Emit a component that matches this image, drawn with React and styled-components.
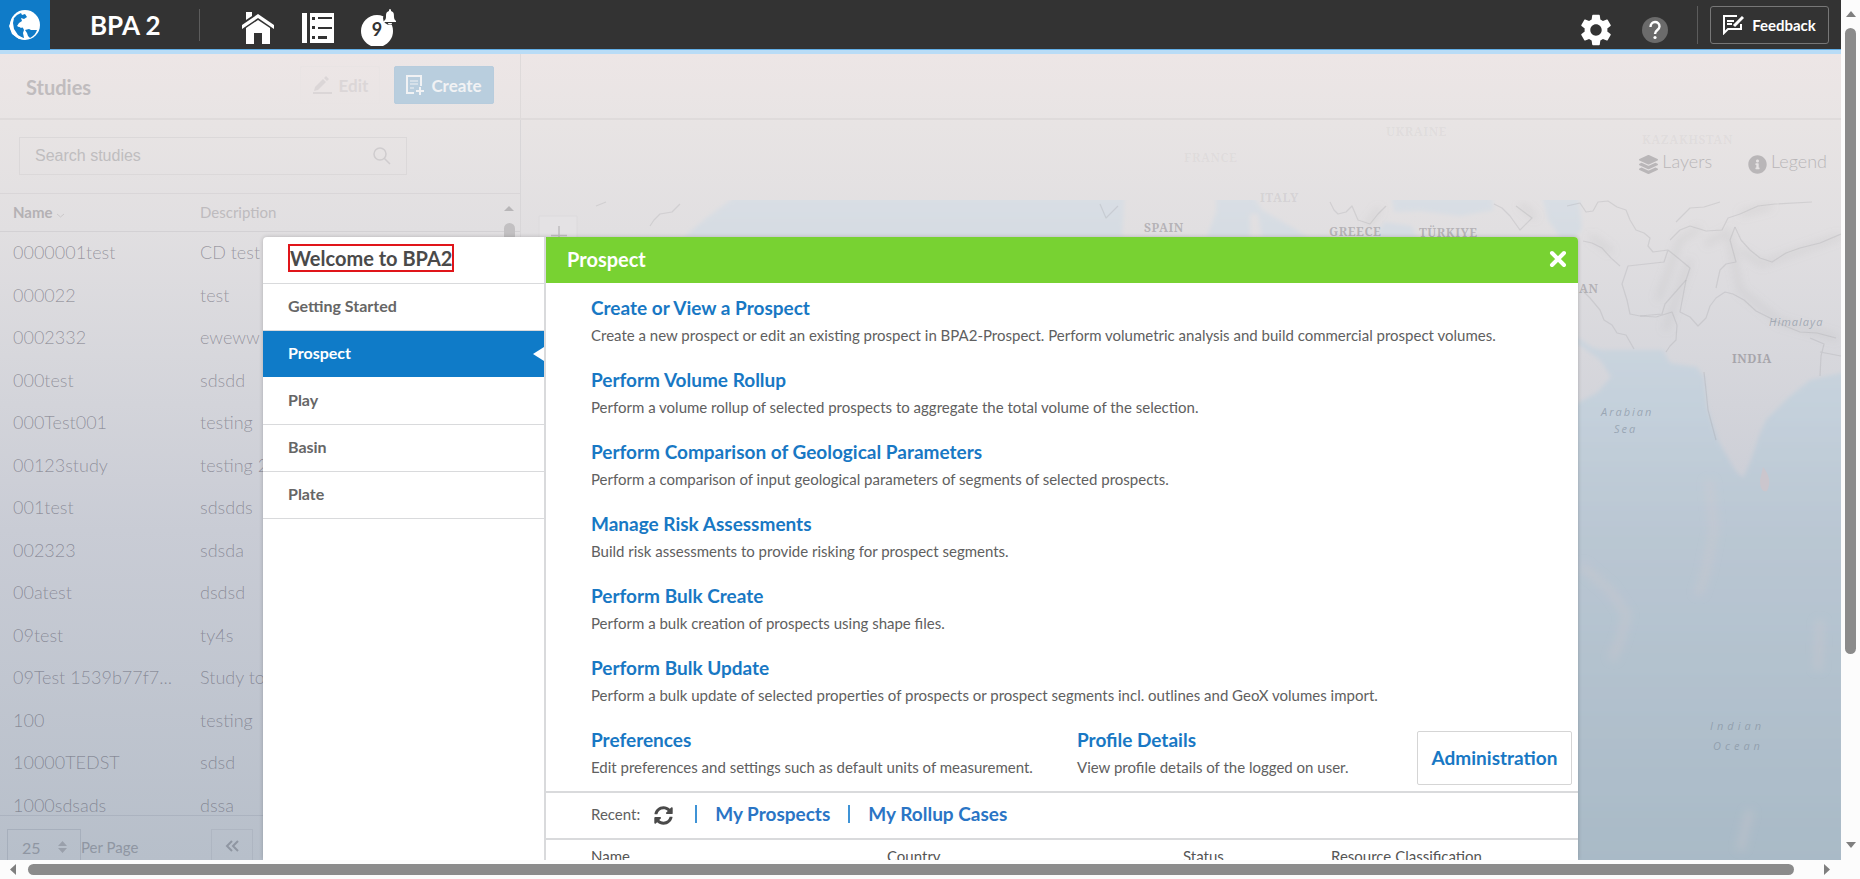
import React from "react";
import styled, { createGlobalStyle } from "styled-components";
import { FaLayerGroup, FaInfoCircle, FaSyncAlt } from "react-icons/fa";
import { MdSettings } from "react-icons/md";

const Global = createGlobalStyle`
  * { box-sizing: border-box; }
  html, body, #root { height: 100%; }
  body { margin: 0; font-family: Lato, "Liberation Sans", sans-serif; color: #555; overflow: hidden; }
  button, select, input { font-family: inherit; }
  h1, h2, h3, p { margin: 0; }
  a { text-decoration: none; }
`;

const Window = styled.div`
  display: grid;
  grid-template: minmax(0, 1fr) 19px / minmax(0, 1fr) 19px;
  height: 100vh;
  background: #fcfcfc;
`;

const Page = styled.div`
  position: relative;
  display: flex;
  flex-direction: column;
  overflow: hidden;
`;

/* ---------- window scroll bars ---------- */
const VScroll = styled.div`
  display: flex;
  flex-direction: column;
  align-items: center;
  padding: 11px 0 12px;
  gap: 11px;
`;
const HScroll = styled.div`
  display: flex;
  align-items: center;
  padding: 0 11px 0 10px;
  gap: 12px;
`;
const Track = styled.div`
  flex: 1;
  display: flex;
  flex-direction: ${(p) => (p.$vertical ? "column" : "row")};
`;
const Thumb = styled.div`
  background: #8b8b8b;
  border-radius: 6px;
  ${(p) => (p.$vertical ? "width: 11px;" : "height: 11px;")}
  flex: 0 0 ${(p) => p.$size};
`;

/* ---------- top bar ---------- */
const TopBar = styled.header`
  display: flex;
  align-items: center;
  height: 54px;
  flex: none;
  background: #333;
  border-bottom: 4px solid #b9dcf6;
  box-shadow: inset 0 -1px 0 #62aee6;
  padding-right: 12px;
`;
const Logo = styled.a`
  display: grid;
  place-items: center;
  width: 50px;
  height: 50px;
  background: #0f7bc8;
`;
const Brand = styled.h1`
  width: 149px;
  padding-left: 40px;
  font-size: 26px;
  line-height: 32px;
  font-weight: 700;
  color: #fff;
`;
const Rule = styled.span`
  width: 1px;
  height: ${(p) => p.$h || 32}px;
  background: #5c5c5c;
`;
const NavIcons = styled.nav`
  display: flex;
  gap: 24px;
  padding: 6px 0 0 40px;
  flex: 1;
`;
const IconButton = styled.button`
  display: grid;
  place-items: center;
  width: 36px;
  height: 40px;
  padding: 0;
  border: 0;
  background: none;
  color: #fff;
`;
const BarActions = styled.div`
  display: flex;
  align-items: center;
  gap: 24px;
`;
const IconPair = styled.div`
  display: flex;
  gap: 24px;
  padding-top: 10px;
`;
const Feedback = styled.button`
  display: flex;
  align-items: center;
  justify-content: center;
  gap: 8px;
  width: 119px;
  height: 38px;
  margin-left: -12px;
  padding: 0;
  border: 1px solid #777;
  border-radius: 3px;
  background: none;
  color: #fff;
  font-size: 15px;
  font-weight: 700;
`;

/* ---------- work area ---------- */
const Work = styled.main`
  flex: 1;
  min-height: 0;
  display: grid;
  grid-template: 66px minmax(0, 1fr) / 521px minmax(0, 1fr);
  background: linear-gradient(#ede6e6 0, #e8e4e4 70px, #e1dfe1 176px, #c9ccd5 476px, #b7bfca 806px);
`;
const StudiesBar = styled.div`
  display: flex;
  align-items: center;
  gap: 14px;
  padding: 0 26px;
  border-right: 1px solid #dedada;
  border-bottom: 2px solid #dfdbdb;
`;
const StudiesTitle = styled.h2`
  flex: 1;
  padding-top: 2px;
  font-size: 20px;
  font-weight: 700;
  color: #c0bcbe;
`;
const ToolButton = styled.button`
  display: flex;
  align-items: center;
  justify-content: center;
  gap: 7px;
  width: ${(p) => (p.$primary ? 100 : 80)}px;
  height: 38px;
  margin-bottom: 2px;
  padding: 0;
  border: 1px solid ${(p) => (p.$primary ? "#b7ccdd" : "#e9e4e4")};
  border-radius: 2px;
  background: ${(p) => (p.$primary ? "#b9cede" : "transparent")};
  color: ${(p) => (p.$primary ? "#f1f2f4" : "#dbd6d7")};
  font-size: 17px;
  font-weight: 700;
`;
const MapBar = styled.div`
  border-bottom: 2px solid #dfdbdb;
`;
const Panel = styled.section`
  display: flex;
  flex-direction: column;
  min-height: 0;
  border-right: 1px solid #d8d6d8;
`;
const SearchRow = styled.div`
  padding: 17px 0 18px 19px;
  border-bottom: 1px solid #d9d6d8;
`;
const SearchBox = styled.label`
  display: flex;
  align-items: center;
  width: 388px;
  height: 38px;
  padding: 0 15px;
  border: 1px solid #dbd8d9;
  color: #cfccce;
`;
const SearchInput = styled.input`
  flex: 1;
  padding: 0;
  border: 0;
  outline: 0;
  background: none;
  font-family: "Liberation Sans", sans-serif;
  font-size: 16px;
  &::placeholder { color: #bfbdbf; opacity: 1; }
`;
const ListArea = styled.div`
  flex: 1;
  min-height: 0;
  overflow: hidden;
  display: grid;
  grid-template-columns: minmax(0, 1fr) 32px;
  background: linear-gradient(transparent 37px, #d3d1d4 37px, #d3d1d4 38px, transparent 38px);
`;
const StudyTable = styled.table`
  width: 100%;
  height: 633px;
  border-collapse: collapse;
  table-layout: fixed;
  font-size: 18px;
  font-weight: 300;
  color: rgba(70, 68, 84, 0.46);
  th {
    height: 38px;
    padding: 0 13px 2px;
    text-align: left;
    font-size: 15px;
    font-weight: 400;
    color: #bebbbe;
  }
  th:first-child { width: 188px; font-weight: 700; color: #b4b1b4; }
  td { padding: 0 13px 2px; white-space: nowrap; overflow: hidden; text-overflow: ellipsis; }
  td + td, th + th { padding-left: 12px; }
`;
const ListScroll = styled.div`
  display: flex;
  flex-direction: column;
  align-items: center;
  gap: 12px;
  padding: 12px 0 0 10px;
`;
const ListThumb = styled.div`
  width: 11px;
  height: 120px;
  border-radius: 6px;
  background: #c2c0c2;
`;
const Pager = styled.div`
  display: flex;
  height: 45px;
  padding: 13px 0 0 7px;
  border-top: 1px solid rgba(90, 100, 120, 0.14);
  color: #8f96a2;
`;
const PageSize = styled.label`
  display: flex;
  align-items: center;
  width: 204px;
  height: 36px;
  font-size: 15px;
`;
const SizeBox = styled.span`
  display: flex;
  align-items: center;
  width: 74px;
  height: 36px;
  padding: 0 13px 0 14px;
  border: 1px solid rgba(90, 100, 120, 0.18);
`;
const SizeSelect = styled.select`
  flex: 1;
  appearance: none;
  padding: 0;
  border: 0;
  background: none;
  color: #8f96a2;
  font-size: 16px;
`;
const PageButton = styled.button`
  width: 42px;
  height: 36px;
  padding: 0;
  border: 1px solid rgba(90, 100, 120, 0.1);
  background: none;
  color: #8f96a2;
`;

/* ---------- map ---------- */
const MapArea = styled.section`
  position: relative;
  overflow: hidden;
  svg.map { display: block; width: 100%; height: 100%; }
`;
const MapTools = styled.div`
  position: absolute;
  top: 27px;
  right: 14px;
  display: flex;
  gap: 36px;
`;
const MapTool = styled.button`
  display: flex;
  align-items: center;
  gap: 4px;
  padding: 0;
  border: 0;
  background: none;
  color: #b9b6b8;
  font-size: 18px;
  line-height: 28px;
  font-weight: 300;
  svg { margin-top: 6px; }
`;

/* ---------- dialog ---------- */
const Dialog = styled.div`
  position: absolute;
  top: 237px;
  bottom: 0;
  left: 263px;
  right: 263px;
  display: grid;
  grid-template-columns: 283px minmax(0, 1fr);
  overflow: hidden;
  border-radius: 4px 4px 0 0;
  background: #fff;
  box-shadow: 0 0 4px rgba(0, 0, 0, 0.2);
`;
const Side = styled.nav`
  border-right: 2px solid #d9dadc;
`;
const SideTitle = styled.h2`
  display: flex;
  height: 47px;
  padding: 7px 0 0 25px;
  border-bottom: 1px solid #d9dadc;
  span {
    height: 28px;
    border: 2px solid #e0151a;
    font-size: 20px;
    line-height: 24px;
    color: #4a4a4a;
  }
`;
const SideItem = styled.a`
  display: flex;
  align-items: center;
  justify-content: space-between;
  height: 47px;
  border-bottom: 1px solid ${(p) => (p.$active ? "#fff" : "#d9dadc")};
  background: ${(p) => (p.$active ? "#0f7bc8" : "#fff")};
  color: ${(p) => (p.$active ? "#fff" : "#666")};
  font-size: 16px;
  font-weight: 700;
  span { padding: 0 0 3px 25px; }
`;
const Main = styled.div`
  display: flex;
  flex-direction: column;
`;
const Title = styled.div`
  display: flex;
  align-items: center;
  justify-content: space-between;
  height: 46px;
  flex: none;
  padding: 0 11px 3px 21px;
  background: #78d232;
  color: #fff;
  h2 { font-size: 20px; }
`;
const Close = styled.button`
  display: grid;
  padding: 0;
  border: 0;
  background: none;
  color: #fff;
`;
const Topics = styled.div`
  display: flex;
  flex-direction: column;
  gap: 16px;
  padding: 11px 6px 6px 45px;
`;
const Topic = styled.article`
  h3 { font-size: 19px; line-height: 28px; }
  h3 a { color: #1878c4; }
  p { font-size: 15px; line-height: 27px; color: #606060; white-space: nowrap; }
  padding-bottom: 1px;
`;
const LastRow = styled.div`
  display: grid;
  grid-template-columns: 486px 1fr auto;
  align-items: start;
`;
const Admin = styled.button`
  width: 155px;
  height: 54px;
  margin-top: 5px;
  padding: 0 0 2px;
  border: 1px solid #d5d5d5;
  border-radius: 2px;
  background: #fff;
  color: #1878c4;
  font-size: 19px;
  font-weight: 700;
`;
const Recent = styled.div`
  display: flex;
  align-items: center;
  height: 49px;
  flex: none;
  padding: 0 0 4px 45px;
  border-top: 2px solid #d9dadc;
  border-bottom: 2px solid #d9dadc;
  font-size: 15px;
  color: #606060;
  a { font-size: 19px; font-weight: 700; color: #2a75c5; }
`;
const Refresh = styled.button`
  display: grid;
  margin: 3px 22px 0 14px;
  padding: 0;
  border: 0;
  background: none;
  color: #4a4a4a;
`;
const Bar = styled.span`
  width: 2px;
  height: 18px;
  margin: ${(p) => (p.$between ? "0 18px" : "0 18px 0 0")};
  background: #3f93d6;
`;
const RecentTable = styled.table`
  width: 980px;
  margin-left: 45px;
  table-layout: fixed;
  border-collapse: collapse;
  th { padding: 0; text-align: left; font-size: 15px; line-height: 33px; font-weight: 400; color: #555; }
`;

const Arrow = ({ d, w, h, color = "#7f7f7f" }) => (
  <svg width={w} height={h} viewBox={`0 0 ${w} ${h}`}><path d={d} fill={color} /></svg>
);

const studies = [
  ["0000001test", "CD test"], ["000022", "test"], ["0002332", "eweww"], ["000test", "sdsdd"],
  ["000Test001", "testing"], ["00123study", "testing 2"], ["001test", "sdsdds"], ["002323", "sdsda"],
  ["00atest", "dsdsd"], ["09test", "ty4s"], ["09Test 1539b77f7...", "Study to"], ["100", "testing"],
  ["10000TEDST", "sdsd"], ["1000sdsads", "dssa"],
];

const topics = [
  ["Create or View a Prospect", "Create a new prospect or edit an existing prospect in BPA2-Prospect. Perform volumetric analysis and build commercial prospect volumes."],
  ["Perform Volume Rollup", "Perform a volume rollup of selected prospects to aggregate the total volume of the selection."],
  ["Perform Comparison of Geological Parameters", "Perform a comparison of input geological parameters of segments of selected prospects."],
  ["Manage Risk Assessments", "Build risk assessments to provide risking for prospect segments."],
  ["Perform Bulk Create", "Perform a bulk creation of prospects using shape files."],
  ["Perform Bulk Update", "Perform a bulk update of selected properties of prospects or prospect segments incl. outlines and GeoX volumes import."],
];

const labels = [
  [1144, 232, "SPAIN", 0.42], [1329, 236, "GREECE", 0.42], [1419, 237, "TÜRKIYE", 0.42],
  [1386, 136, "UKRAINE", 0.08], [1184, 162, "FRANCE", 0.07], [1642, 144, "KAZAKHSTAN", 0.08],
  [1260, 202, "ITALY", 0.14], [1579, 293, "AN", 0.42], [1732, 363, "INDIA", 0.5],
];
const seaLabels = [
  [1601, 416, "Arabian"], [1614, 433, "Sea"], [1710, 730, "Indian"], [1713, 750, "Ocean"],
];

function WorldMap() {
  return (
    <svg className="map" viewBox="521 120 1320 740" preserveAspectRatio="xMaxYMin slice" aria-label="Map">
      <defs>
        <linearGradient id="sea" gradientUnits="userSpaceOnUse" x1="0" y1="200" x2="0" y2="860">
          <stop offset="0" stopColor="#d9dee4" />
          <stop offset="0.3" stopColor="#c5d1dc" />
          <stop offset="0.5" stopColor="#bac7d3" />
          <stop offset="1" stopColor="#a9bac7" />
        </linearGradient>
        <filter id="soft"><feGaussianBlur stdDeviation="4" /></filter>
        <filter id="shore" x="-5%" y="-5%" width="110%" height="110%"><feGaussianBlur stdDeviation="2" /></filter>
        <clipPath id="below"><rect x="521" y="200" width="1320" height="660" /></clipPath>
      </defs>
      <g clipPath="url(#below)">
        <g fill="url(#sea)" filter="url(#shore)">
          <path d="M743 190H1125L1122 237H684L704 220Z" />
          <path d="M1207 237L1216 212L1216 190H1250L1262 210L1290 226L1308 237H1262L1258 214H1250V237Z" />
          <path d="M1390 190H1490L1494 210L1460 216L1420 211L1394 212Z" />
          <path d="M1540 190L1578 190L1582 228L1576 237H1560L1548 220Z" />
          <path d="M1376 237L1384 222L1412 226L1416 237Z" />
          <path d="M1570 333L1593 348L1604 350H1663L1670 363L1697 367L1704 377L1707 407L1718 440L1735 470L1743 478L1751 460L1760 433L1766 420L1789 397L1810 380L1850 371V870H1570V407L1597 393L1611 377L1600 360L1578 344Z" />
        </g>
        <path d="M1763 467Q1773 479 1767 491Q1760 493 1760 480Z" fill="#cbc6cd" />
        <g fill="none" stroke="#d4c9cd" strokeOpacity=".3" strokeWidth="8" filter="url(#soft)">
          <path d="M1581 565L1610 590L1627 615L1620 640L1612 660" />
          <path d="M1709 480L1714 530L1705 575L1698 595" />
          <path d="M1820 620L1818 670M1750 810L1740 850" />
        </g>
        <g fill="none" stroke="#8c8a92" strokeOpacity=".2" strokeWidth="1.2" strokeLinejoin="round">
          <path d="M1567 206L1580 203L1586 212L1593 211L1598 202L1608 201L1617 207L1626 210L1630 220L1636 230L1644 233L1650 238L1648 246L1653 252L1668 250L1664 262L1628 266L1625 275L1622 284L1627 300L1630 314L1640 316L1662 314L1665 304L1672 296L1686 280L1690 268L1678 258L1668 250" />
          <path d="M1583 241L1592 243L1602 248L1611 258L1620 266M1582 290L1590 298L1600 310L1604 320L1612 325L1617 333L1626 335L1634 349M1640 316L1656 317L1672 312L1677 325L1676 340L1670 346L1666 352M1686 280L1683 296L1680 312L1690 317L1698 326L1706 318L1710 306L1716 298L1725 292" />
          <path d="M1725 292L1733 294L1744 300L1756 311L1770 318L1785 326L1800 332L1817 333L1836 338M1810 338L1824 344L1821 356L1820 376M1820 352L1841 356M1735 227L1741 240L1750 250L1760 258L1772 262L1786 253L1800 248L1820 243L1841 234" />
          <path d="M1676 222L1690 208L1704 207L1720 202M1670 240L1680 230L1690 226L1706 231L1722 230L1728 218L1740 214L1758 206L1775 204L1812 202M1735 227L1730 240L1736 262L1726 264L1720 270L1716 288" />
          <path d="M1704 372L1706 390L1708 410L1716 440M1330 202L1334 210L1338 214L1346 212L1352 206L1358 220L1370 224L1378 214L1386 206M1494 204L1502 208L1510 216L1520 230L1532 218L1516 206M1100 204L1106 218L1118 206M596 206L606 202M650 226L654 220L660 214L672 212L680 204" />
        </g>
        <path d="M1658 300L1680 240L1700 228M1665 330L1690 260M1705 244L1728 232L1740 290L1780 322L1838 338M1590 236L1612 252M1520 204L1536 218M1380 208L1366 226M1740 214L1772 206M1740 250L1762 264L1841 236" fill="none" stroke="#999" strokeOpacity=".16" strokeWidth="6" filter="url(#soft)" />
      </g>
      <g fontFamily="'Noto Serif', 'Liberation Serif', serif" fontSize="12" fontWeight="700" letterSpacing="0.5" fill="#77747a">
        {labels.map(([x, y, t, o]) => <text key={t} x={x} y={y} fillOpacity={o}>{t}</text>)}
      </g>
      <g fontFamily="'Open Sans', sans-serif" fontSize="11" fontStyle="italic" fill="#7d8a99" fillOpacity=".6">
        <text x="1769" y="326" letterSpacing="1">Himalaya</text>
        {seaLabels.map(([x, y, t]) => <text key={t} x={x} y={y} letterSpacing={y > 500 ? 4 : 2}>{t}</text>)}
      </g>
      <path d="M539 237V216H577V237" fill="#e4e2e4" stroke="#dcdadc" />
      <path d="M559 226V240M551 235.500H567" stroke="#bfbdbf" strokeWidth="1.500" />
    </svg>
  );
}

const Globe = () => (
  <svg width="32" height="32" viewBox="0 0 32 32">
    <circle cx="16" cy="16" r="15" fill="#fff" />
    <path fill="#0f7bc8" d="M8 6L12 4L13 6L16 5L18 8L15 10L12 9L13 12L10 14L8 17L10 18L12 17L14 19L15 21L14 24L15 29C9 28 5 25 3 20L2 14L5 9Z" />
    <path fill="#0f7bc8" d="M16 21L20 20L22 21L28 21C27 24 25 27 21 29L19 27L18 24Z" />
    <path fill="#fff" d="M2 12L5 9L4 14L5 20L9 26L14 29L17 31L10 30L3 25L0 17ZM9 17L12 16L14 18L12 19ZM13 2L17 3L16 5L13 4Z" />
  </svg>
);

export default function App() {
  return (
    <>
      <Global />
      <Window>
        <Page>
          <TopBar>
            <Logo href="#" aria-label="Home page"><Globe /></Logo>
            <Brand>BPA 2</Brand>
            <Rule />
            <NavIcons>
              <IconButton aria-label="Home">
                <svg width="34" height="34" viewBox="0 0 34 34" fill="#fff">
                  <path d="M5 1H11V5L5 9ZM17 3L33 14V18L17 7L1 18V14Z" />
                  <path d="M17 9L29 17V33H21V22H13V33H5V17Z" />
                </svg>
              </IconButton>
              <IconButton aria-label="List">
                <svg width="32" height="30" viewBox="0 0 32 30">
                  <path fill="#fff" d="M0 0H5V30H0ZM8 0H32V30H8Z" />
                  <path fill="#333" d="M10 4H13V7H10ZM16 4H30V6H16ZM10 13H13V16H10ZM16 14H30V16H16ZM10 23H13V26H10ZM16 23H25V26H16Z" />
                </svg>
              </IconButton>
              <IconButton aria-label="Notifications">
                <svg width="36" height="38" viewBox="0 0 36 38">
                  <path d="M17 6A16 16 0 0 1 33 22C33 29 29 34 23 37H11C5 34 1 29 1 22A16 16 0 0 1 17 6Z" fill="#fff" />
                  <circle cx="30" cy="9" r="7" fill="#333" />
                  <path d="M30 0C31 0 31 1 31 2C34 3 34 5 34 8C34 10 35 11 36 12V13H24V12C25 11 26 10 26 8C26 5 26 3 29 2C29 1 29 0 30 0ZM28 14H32C32 16 28 16 28 14Z" fill="#fff" />
                  <text x="17" y="27" textAnchor="middle" fontSize="18" fontWeight="700" fill="#333">9</text>
                </svg>
              </IconButton>
            </NavIcons>
            <BarActions>
              <IconPair>
                <IconButton aria-label="Settings"><MdSettings size={38} /></IconButton>
                <IconButton aria-label="Help">
                  <svg width="26" height="26" viewBox="0 0 26 26">
                    <circle cx="13" cy="13" r="13" fill="#6b6b6b" />
                    <path d="M8.500 10C8.500 3.500 17.500 3.500 17.500 9.500C17.500 13 13 13 13 17" fill="none" stroke="#fff" strokeWidth="2.400" />
                    <circle cx="13" cy="20.500" r="1.600" fill="#fff" />
                  </svg>
                </IconButton>
              </IconPair>
              <Rule $h={38} />
              <Feedback>
                <svg width="21" height="20" viewBox="0 0 21 20" fill="none" stroke="#fff" strokeWidth="2">
                  <path d="M14 1H1V18L5 14H18V9M4 6H11M4 9H9" />
                  <path d="M20 2L11 11" strokeWidth="3" />
                </svg>
                Feedback
              </Feedback>
            </BarActions>
          </TopBar>

          <Work>
            <StudiesBar>
              <StudiesTitle>Studies</StudiesTitle>
              <ToolButton>
                <svg width="20" height="18" viewBox="0 0 20 18" fill="currentColor">
                  <path d="M1 16H20V18H1ZM3 11L11 3L14 6L6 14L2 15ZM12 2L14 0L17 3L15 5Z" />
                </svg>
                Edit
              </ToolButton>
              <ToolButton $primary>
                <svg width="18" height="20" viewBox="0 0 18 20" fill="none" stroke="currentColor" strokeWidth="2">
                  <path d="M8 18H1V1H15V11M14 12V20M10 16H18" />
                  <path d="M4 6H12M4 9H12M4 13H8" strokeWidth="1" />
                </svg>
                Create
              </ToolButton>
            </StudiesBar>
            <MapBar />
            <Panel>
              <SearchRow>
                <SearchBox>
                  <SearchInput placeholder="Search studies" aria-label="Search studies" />
                  <svg width="18" height="18" viewBox="0 0 18 18" fill="none" stroke="currentColor" strokeWidth="1.500">
                    <circle cx="7" cy="7" r="6" /><path d="M11 11L17 17" />
                  </svg>
                </SearchBox>
              </SearchRow>
              <ListArea>
                <StudyTable>
                  <thead>
                    <tr>
                      <th>Name <svg width="9" height="5" viewBox="0 0 9 5" fill="none" stroke="#cbc8ca"><path d="M1 1L4.500 4L8 1" /></svg></th>
                      <th>Description</th>
                    </tr>
                  </thead>
                  <tbody>
                    {studies.map(([n, d]) => <tr key={n}><td>{n}</td><td>{d}</td></tr>)}
                  </tbody>
                </StudyTable>
                <ListScroll>
                  <Arrow w={10} h={5} d="M0 5L5 0L10 5Z" color="#b8b6b8" />
                  <ListThumb />
                </ListScroll>
              </ListArea>
              <Pager>
                <PageSize>
                  <SizeBox>
                    <SizeSelect><option>25</option></SizeSelect>
                    <Arrow w={9} h={12} d="M0 5L4.500 0L9 5ZM0 7H9L4.500 12Z" color="#9aa0ab" />
                  </SizeBox>
                  Per Page
                </PageSize>
                <PageButton aria-label="First page">
                  <svg width="14" height="12" viewBox="0 0 14 12" fill="none" stroke="currentColor" strokeWidth="2"><path d="M7 1L2 6L7 11M13 1L8 6L13 11" /></svg>
                </PageButton>
              </Pager>
            </Panel>
            <MapArea>
              <WorldMap />
              <MapTools>
                <MapTool><FaLayerGroup size={19} />Layers</MapTool>
                <MapTool><FaInfoCircle size={19} />Legend</MapTool>
              </MapTools>
            </MapArea>
          </Work>

          <Dialog role="dialog" aria-label="Welcome to BPA2">
            <Side>
              <SideTitle><span>Welcome to BPA2</span></SideTitle>
              {["Getting Started", "Prospect", "Play", "Basin", "Plate"].map((t) => (
                <SideItem key={t} href="#" $active={t === "Prospect"}>
                  <span>{t}</span>
                  {t === "Prospect" && <Arrow w={11} h={14} d="M0 7L11 0V14Z" color="#fff" />}
                </SideItem>
              ))}
            </Side>
            <Main>
              <Title>
                <h2>Prospect</h2>
                <Close aria-label="Close">
                  <svg width="18" height="18" viewBox="0 0 18 18" stroke="#fff" strokeWidth="4" strokeLinecap="round"><path d="M3 3L15 15M15 3L3 15" /></svg>
                </Close>
              </Title>
              <Topics>
                {topics.map(([t, d]) => (
                  <Topic key={t}><h3><a href="#">{t}</a></h3><p>{d}</p></Topic>
                ))}
                <LastRow>
                  <Topic><h3><a href="#">Preferences</a></h3><p>Edit preferences and settings such as default units of measurement.</p></Topic>
                  <Topic><h3><a href="#">Profile Details</a></h3><p>View profile details of the logged on user.</p></Topic>
                  <Admin>Administration</Admin>
                </LastRow>
              </Topics>
              <Recent>
                Recent:
                <Refresh aria-label="Refresh"><FaSyncAlt size={19} /></Refresh>
                <Bar /><a href="#">My Prospects</a>
                <Bar $between /><a href="#">My Rollup Cases</a>
              </Recent>
              <RecentTable>
                <colgroup><col width="296" /><col width="296" /><col width="148" /><col width="240" /></colgroup>
                <thead><tr><th>Name</th><th>Country</th><th>Status</th><th>Resource Classification</th></tr></thead>
              </RecentTable>
            </Main>
          </Dialog>
        </Page>
        <VScroll>
          <Arrow w={10} h={6} d="M0 6L5 0L10 6Z" />
          <Track $vertical><Thumb $vertical $size="78%" /></Track>
          <Arrow w={10} h={6} d="M0 0H10L5 6Z" />
        </VScroll>
        <HScroll>
          <Arrow w={6} h={11} d="M6 0V11L0 5.500Z" />
          <Track><Thumb $size="99%" /></Track>
          <Arrow w={6} h={11} d="M0 0V11L6 5.500Z" />
        </HScroll>
      </Window>
    </>
  );
}
